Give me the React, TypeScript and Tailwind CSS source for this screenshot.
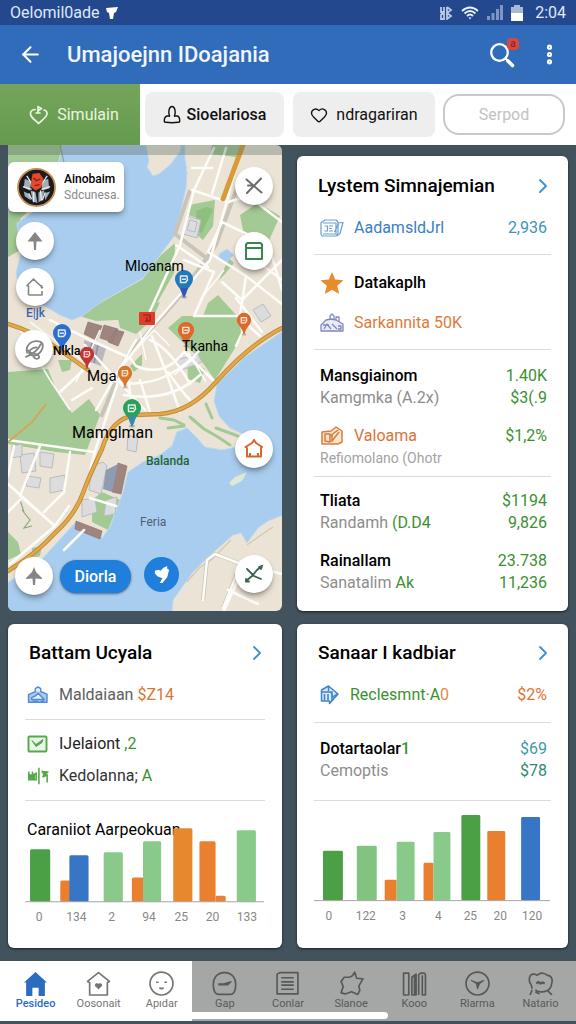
import React from "react";
import { ArrowLeft, ChevronRight, Heart, MoreVertical } from "lucide-react";

type IconProps = { className?: string };

const LeafHeartIcon: React.FC<IconProps> = ({ className }) => (
  <svg viewBox="0 0 20 20" className={className} fill="none" stroke="currentColor" strokeWidth="1.7" strokeLinecap="round" strokeLinejoin="round">
    <path d="M6 4.500C3 4.500 1 6.500 1.500 9.500c.5 3 4.500 5.500 8 9 3.500-3.500 8-6 8.500-9.500.2-2-1-3.800-3-4" />
    <path d="M9 1.500v6.500M9.500 2l3 1.500-3 2M7 8h4" />
  </svg>
);

const PersonIcon: React.FC<IconProps> = ({ className }) => (
  <svg viewBox="0 0 18 20" className={className} fill="none" stroke="currentColor" strokeWidth="1.4" strokeLinecap="round">
    <path d="M6.500 11C5 7 6 1.500 9 1.500S13 7 11.500 11" />
    <path d="M6.500 11H4c-2 .500-2.800 3-2.700 5.500 0 .8 1 .8 1.700.8M11.500 11h3c1.700.500 2.300 3 2.200 5.500 0 .8-1 .8-1.700.8M3 17.300c4 .6 8 .6 12 0" />
  </svg>
);

const SearchIcon: React.FC<IconProps> = ({ className }) => (
  <svg viewBox="0 0 26 26" className={className} fill="none" stroke="currentColor" strokeLinecap="round">
    <circle cx="10.500" cy="10.500" r="8.300" strokeWidth="2.300" />
    <path d="M17 17l1.500 1.500" strokeWidth="2.300" />
    <path d="M19 19l4.500 4.500" strokeWidth="3.600" />
  </svg>
);

const LedgerIcon: React.FC<IconProps> = ({ className }) => (
  <svg viewBox="0 0 24 20" className={className} fill="none" stroke="currentColor" strokeWidth="1.200" strokeLinejoin="round">
    <path d="M2 4l3-2h11l2 2v11l-2 3H2L1 16V5z" />
    <path d="M3 5h13v11H3M18 5l5-.500-3 11-3 2.500M4.500 8h3v5h-3M9 8h4M9 10.500h3M9 13h4M14.500 14l4-8" />
  </svg>
);

const FarmIcon: React.FC<IconProps> = ({ className }) => (
  <svg viewBox="0 0 24 20" className={className} fill="none" stroke="currentColor" strokeWidth="1.300" strokeLinejoin="round">
    <path d="M1 18v-6l5-5 5-1 5 1 7 4v7z" fill="#e9ebf6" />
    <path d="M10 6V3l2-2 2 2v4M16 7V4h3v5M4 16l3-5 4 5M12 11l5 5M18 13h3v3h-3M3 12h6" />
  </svg>
);

const BarnIcon: React.FC<IconProps> = ({ className }) => (
  <svg viewBox="0 0 24 20" className={className} stroke="currentColor" strokeWidth="1.600" strokeLinejoin="round">
    <path d="M1.500 18V9.500L12 5l10 4v9z" fill="#a9caee" />
    <path d="M9 6.500V3l3-2 3 2v3.500M5 13l4-2 3-3 4 4 3 3H5z" fill="#e4effa" />
    <path d="M6 17h6M15 17h4" fill="none" />
  </svg>
);

const CrateIcon: React.FC<IconProps> = ({ className }) => (
  <svg viewBox="0 0 24 20" className={className} fill="#fbe6d2" stroke="currentColor" strokeWidth="1.500" strokeLinejoin="round">
    <path d="M2 6l9-1 5-4 6 4v11l-4 2H2z" />
    <path d="M5 8v7l5 1V8zM10 10l8-6M12 15l7-9M12 8v8" fill="none" />
  </svg>
);

const MailCheckIcon: React.FC<IconProps> = ({ className }) => (
  <svg viewBox="0 0 22 18" className={className} fill="none" stroke="currentColor" strokeWidth="1.900" strokeLinejoin="round">
    <rect x="1.500" y="1.500" width="18" height="15" rx="1" fill="#eaf6e8" />
    <path d="M5 5.500l4 4 7-5-1 3-6 4z" fill="currentColor" strokeWidth="1" />
  </svg>
);

const SplitIcon: React.FC<IconProps> = ({ className }) => (
  <svg viewBox="0 0 24 20" className={className} fill="none" stroke="currentColor" strokeWidth="1.700">
    <path d="M13 1v18" />
    <path d="M2 5v9l4-1V5M6 9l4-2v7H3M16 6h6l-5 5 5-2v8" />
    <path d="M3 9h5v4H3zM17 5l5 1-3 4z" fill="currentColor" />
  </svg>
);

const BoxTagIcon: React.FC<IconProps> = ({ className }) => (
  <svg viewBox="0 0 20 20" className={className} fill="#d7e8f8" stroke="currentColor" strokeWidth="1.500" strokeLinejoin="round">
    <path d="M1.500 5l7-4 9.500 8-8.500 9.500V16h-8z" />
    <path d="M8.500 1v5M2 7h10v9M4.500 9v6M8 9v6M11 7l2 5 4-3" fill="none" />
  </svg>
);

/* ---------- map ---------- */

type PinProps = { x: number; y: number; color: string; s?: number; tail?: string };

// x, y is the centre of the round head
const Pin: React.FC<PinProps> = ({ x, y, color, s = 1, tail }) => (
  <g transform={`translate(${x} ${y}) scale(${s})`}>
    <ellipse cx="0" cy="18" rx="3" ry="1.500" fill="#55606a" opacity=".35" />
    <path d="M-9 0a9 9 0 1 1 18 0c0 4.500-4 8-6.500 12L0 19l-2.500-7C-5 8-9 4.500-9 0z" fill={color} />
    {tail && <path d="M-4 9h8l-2 6-2 4-2-4z" fill={tail} />}
    <path d="M-3.500-3h6.500l.5 4-2 2.500h-5zM-2 .3h4" fill="none" stroke="#fff" strokeWidth="1.500" strokeLinejoin="round" opacity=".85" />
  </g>
);

const MapDrawing: React.FC = () => (
  <svg viewBox="8 145 274 466" preserveAspectRatio="xMidYMid slice" className="absolute inset-0 h-full w-full" aria-hidden="true">
    <rect x="8" y="145" width="274" height="466" fill="#ebe4d6" />

    {/* parks */}
    <g fill="#a3c994">
      <path d="M8 145h56l-6 20-34 10 10 30-14 14 2 30-14 8z" />
      <path d="M212 145h30l-6 12-26-3zM240 215l18-12 22 13-14 31-21-7zM189 205l26-5-2 26-10 14-6-5 4-16-13-4z" />
      <path d="M175 243l-15 13-17 23-43 24-24 12 20 6 40-2 20-14 18-32zM229 258l5 5-10 12-5 5z" />
      <path d="M208 303l10-8 20 22 4 20-27 43-15-21-32-31 14-12h21zM118 318l42-16-8 18-16 14-16-6zM130 366l12-12v11l-8 7z" />
      <path d="M8 372l40-3 8 20 16 24 17-14 11 16-15 40-29-3-48-8zM58 360h14l-2 10-8 2zM187 358l18 11-5 14-12-4z" />
      <path d="M8 532l10 10 3 12-13 6zM92 500l10-8 18 8-12 30-16-8zM32 548l10-2-2 10-7 2z" />
    </g>
    <path d="M196 211l10-4 7 2-11 24-6-2z" fill="#8fbf7f" />

    {/* water */}
    <g fill="#a9cdee" stroke="#bcd9f2" strokeWidth="1">
      <path d="M63 145h83l3 16-2 6 6 9 6-2 12-10 4-6 5-6 1-7h4v13l2 15-1 15-11 47-15 20-17 23-42 24-19 14-10 4-12-5-17-10-23-12-4-20 5-20-4-30 30-20z" />
      <path d="M283 331L245 357 217 384 214 401 219 416 230 428 245 435 252 441 236 447 222 450 205 447 196 437 187 428 177 432 172 446 158 456 143 462 128 472 123 492 110 527 102 538 75 523 43 558 20 575 7 583V612H172L173 600 193 572 207 558 233 535 241 533 247 543 258 528 268 521 283 515z" />
      <path d="M219 254l8-5 7 6-8 7-7-2z" />
    </g>
    <g fill="none" stroke="#a3c994" strokeWidth="3" strokeLinejoin="round" strokeLinecap="round">
      <path d="M160 418l14 2 10 5M190 417l14 12 14 8 12 8M168 428l16-2M216 428l22 8M206 404l6 14" />
    </g>

    {/* shore south of the bay */}
    <path d="M229 483l6-6 12-5-5 9-10 5z" fill="#dfe8d6" />
    <path d="M187 582l12-14 12-8 20-20M247 545l14-10 12-8" stroke="#d5c8ab" strokeWidth="1.200" fill="none" />

    {/* blocks and buildings */}
    <g fill="#dcdcdc" stroke="#b9bcc0" strokeWidth="1">
      <path d="M187 216l14 4-4 18-14-4z" />
      <path d="M190 220l7 2-2 10-8-2zM20 455l14-2 2 18-14 2zM40 452l14 2-2 14-12-2zM28 476l13 2-2 10-13-2zM50 478l15-3v15l-15 3zM82 500l13-2 2 14-15 5zM106 500l11-3-2 17-11 2zM92 466l11-4 4 4-6 28-12-4zM128 435l10 3-2 14-9-2z" />
      <path d="M176 360l22-6 4 8-20 8zM253 310l10-6 8 12-10 6zM12 446l10-2v12l-10 2z" />
    </g>
    <g fill="#a0857f" stroke="#8b7672" strokeWidth=".7">
      <path d="M88 322l14 4-6 14-12-6zM104 325l14 4-6 13-12-4zM116 330l8 2-6 14-10-4z" />
      <path d="M118 463l9 3-6 28-9-2zM76 521l26 10-2 8-25-10z" />
    </g>
    <path d="M106 470l12-6-6 28-9-3z" fill="#8e9bb0" />
    <path d="M84 340l22 8-5 18-16-6z" fill="#b9b6bd" />
    <path d="M92 343l-4 18M98 345l-4 18" stroke="#8d8fa0" strokeWidth="1.500" />
    <path d="M22 510l8 10-6 8 8-2M20 500l4 12M60 145l6 26" stroke="#90a884" strokeWidth="1.200" fill="none" />

    {/* minor roads */}
    <g fill="none" stroke="#c9c4ba" strokeWidth="4" strokeLinejoin="round">
      <path d="M190 190l-15 44 34 26M238 185l-22 60-40 56-50 56-25 60M203 600l4-40 8-6 26 10-18 44" />
    </g>
    <g fill="none" stroke="#fdfcf8" strokeWidth="2.500" strokeLinejoin="round" strokeLinecap="round">
      <path d="M214 148l-20 42-14 55-30 66M192 190l36 12 20-6 34 26M238 160l-12 44-16 56-54 62-32 42-28 84-6 22" />
      <path d="M176 245l32 22M184 260l30 12-20 44h46l6-40-38-24 14-30 46 22 14 46M222 282l20 18 40-40M248 320l-12 26M240 318l20 18" />
      <path d="M246 276l36 28M258 262l24 18M262 332l-26-34M226 148l-14 46M192 168l20 0" />
      <path d="M50 320l40 20 40 18 6 8q28 12 48-14l30 29M85 345l60 65M110 380q50 14 90-30M96 410l40-70M152 336l14 36 14 40M150 340q20 8 40 44M140 380l10 32M128 372l4 42M168 372q14 20 22 28M124 395q46 8 76-20M60 392l30-28M72 400l20-12" />
      <path d="M8 440l86 12M14 446l-6 30M40 446l-20 50 35 30-45 38M8 484l47 42 14-20M70 452l-6 40-20 20M90 498l26 8M20 500l-12 12M84 530l-20 20" />
      <path d="M203 600l4-40 8-6 26 10-18 44M240 562l42 12M240 575l-16 36M228 590l30 14" />
    </g>
    <g fill="none" stroke="#fdfcf8" strokeWidth="1.500">
      <path d="M20 330l30 50 20 30M30 322l60 44M200 300l24-30M100 330l-24 52M134 352l20-22 16 16M146 360l-6-28M174 375l22-18M206 382l-18-30" />
    </g>

    {/* main roads */}
    <g fill="none" strokeLinecap="round">
      <path d="M8 324q26 8 46 22t34 24M282 328q-32 16-66 54-26 30-56 32l-25 1q-24 4-33 34-14 30-19 44-8 22-28 40-18 20-47 38" stroke="#c48c35" strokeWidth="4.500" />
      <path d="M8 324q26 8 46 22t34 24M282 328q-32 16-66 54-26 30-56 32l-25 1q-24 4-33 34-14 30-19 44-8 22-28 40-18 20-47 38" stroke="#e2a94c" strokeWidth="2.500" />
      <path d="M243 145l-20 54" stroke="#d99a3a" strokeWidth="5" />
      <path d="M8 442l24-20 14-18" stroke="#d3a65a" strokeWidth="2" />
    </g>

    <path d="M8 145h274v10H8z" fill="#5a6a62" opacity=".35" />

    {/* pins */}
    <rect x="139" y="312" width="16" height="13" rx="1" fill="#e03c2b" />
    <path d="M143 315h7v6h-5M147 317v5" stroke="#8f1f16" strokeWidth="1.200" fill="none" />
    <Pin x={184} y={279} color="#2477b8" tail="#3457b5" />
    <Pin x={62} y={333} color="#2a6fd0" />
    <Pin x={87} y={354} color="#c43432" s={0.8} />
    <Pin x={125} y={373} color="#d9772b" s={0.8} />
    <Pin x={186} y={330} color="#dd6a2c" s={0.9} />
    <Pin x={244} y={320} color="#dd6a2c" s={0.8} />
    <Pin x={132} y={408} color="#2c9f5c" tail="#3f86b4" />
  </svg>
);

const MapButton: React.FC<{ label: string; className: string; children: React.ReactNode }> = ({ label, className, children }) => (
  <button aria-label={label} className={`absolute flex h-[38px] w-[38px] items-center justify-center rounded-full bg-white shadow-md shadow-black/30 ${className}`}>
    {children}
  </button>
);

const MapLabel: React.FC<{ className: string; children: React.ReactNode }> = ({ className, children }) => (
  <span className={`absolute whitespace-nowrap leading-4 ${className}`}>{children}</span>
);

const ArrowPin: React.FC = () => (
  <svg viewBox="0 0 20 20" className="h-5 w-5" fill="#858585">
    <path d="M10 1l7.500 9.500h-6L11 19H9l-.500-8.500h-6z" />
  </svg>
);

const MapCard: React.FC = () => (
  <section className="relative overflow-hidden rounded-b-md rounded-tr-md">
    <MapDrawing />

    <MapLabel className="left-[117px] top-[113px] text-[14px] text-black">Mloanam</MapLabel>
    <MapLabel className="left-[18px] top-[160px] text-[12px] font-medium text-[#3c67b4]">E|jk</MapLabel>
    <MapLabel className="left-[45px] top-[198px] text-[12px] font-medium text-black">Nlkla</MapLabel>
    <MapLabel className="left-[174px] top-[193px] text-[14px] text-black">Tkanha</MapLabel>
    <MapLabel className="left-[79px] top-[223px] text-[15px] text-black">Mga</MapLabel>
    <MapLabel className="left-[64px] top-[280px] text-[16px] text-black">Mamglman</MapLabel>
    <MapLabel className="left-[138px] top-[308px] text-[12px] font-medium text-[#21652f]">Balanda</MapLabel>
    <MapLabel className="left-[132px] top-[369px] text-[12px] text-[#4d5f74]">Feria</MapLabel>

    <div className="absolute left-0 top-[17px] flex h-[50px] w-[116px] items-center gap-2 rounded-md bg-white pl-[9px] shadow-md shadow-black/30">
      <svg viewBox="0 0 40 40" className="h-[39px] w-[39px] shrink-0">
        <circle cx="20" cy="20" r="19" fill="#1d1b1c" stroke="#c58f57" strokeWidth="1.800" />
        <path d="M8 11l7 3-2 9-6-3zM25 14l7-3 1 10-7 2zM14 23l5 2 2 11-5-2zM22 25l6-2-2 10-4 2zM7 24l6 3 1 6-6-4zM28 26l6-2-5 9z" fill="#9fb0bb" />
        <path d="M10 8l5 8M31 8l-6 9M6 19l9 3M34 19l-9 3M17 24v11M24 23l1 10M12 26l3 6M29 25l-3 8" stroke="#e9edf0" strokeWidth="1.300" />
        <path d="M16 6l7-1 4 6-2 9-6 3-5-4 1-8z" fill="#e3492f" />
        <path d="M17 10l3 3 4-2M18 18l5-1" stroke="#7d1c12" strokeWidth="1.200" fill="none" />
      </svg>
      <div className="leading-4">
        <p className="text-[12px] font-medium text-black">Ainobaim</p>
        <p className="text-[12px] text-[#8a8a8a]">Sdcunesa.</p>
      </div>
    </div>

    <MapButton label="North" className="left-2 top-[77px]">
      <ArrowPin />
    </MapButton>
    <MapButton label="Home" className="left-2 top-[123px]">
      <svg viewBox="0 0 20 20" className="h-5 w-5" fill="none" stroke="#858585" strokeWidth="1.600" strokeLinejoin="round">
        <path d="M3.500 18V9L2 8.500 8.500 2l3 3 6 5.500-1.500.5M17 14v4H3.500M16.500 8v3" />
      </svg>
    </MapButton>
    <MapButton label="Leaf" className="left-[7px] top-[185px]">
      <svg viewBox="0 0 20 20" className="h-[21px] w-[21px]" fill="none" stroke="#858585" strokeWidth="1.700" strokeLinecap="round">
        <path d="M3 13C1 7 6 2 12 2c6 0 7 4 5 8-2 5-8 8-12 4-1-3 3-6 7-6M2 17c5-2 11-6 14-12M4 11c3 4 8 2 10 5s-3 4-5 1" />
      </svg>
    </MapButton>
    <MapButton label="Locate" className="left-[7px] top-[412px]">
      <svg viewBox="0 0 20 20" className="h-5 w-5" fill="#858585">
        <path d="M10 1l2 5 6 6v1l-6.500-.500L11 19H9l-.500-6.500L2 13v-1l6-6z" />
      </svg>
    </MapButton>
    <MapButton label="Close" className="right-[9px] top-[22px]">
      <svg viewBox="0 0 20 20" className="h-5 w-5" fill="none" stroke="#6c6c6c" strokeWidth="2" strokeLinecap="round">
        <path d="M2.500 3.500l15 13M17 2.500L3 17M4 9.500h5" />
      </svg>
    </MapButton>
    <MapButton label="Calendar" className="right-[9px] top-[87px]">
      <svg viewBox="0 0 20 20" className="h-5 w-5" fill="none" stroke="#35884f" strokeWidth="2" strokeLinejoin="round">
        <path d="M2 3.500L3.500 2h13L18 3.500V18H2zM2 7h16" />
      </svg>
    </MapButton>
    <MapButton label="House" className="right-[9px] top-[285px]">
      <svg viewBox="0 0 20 20" className="h-5 w-5" fill="none" stroke="#d3672e" strokeWidth="2" strokeLinejoin="round">
        <path d="M3 17.500V9L1.500 8 8 4l2-3 2 3 6 4-1 1v8.500zM6 14v3M14 14v3M3 17.500h14" />
      </svg>
    </MapButton>
    <MapButton label="Route" className="right-[9px] top-[410px]">
      <svg viewBox="0 0 20 20" className="h-5 w-5" fill="none" stroke="#3c6152" strokeWidth="1.800" strokeLinecap="round">
        <path d="M3 5l5 5 2 2 7 3M18 2l-5 4-5 6-6 5M15 3l3-1-1 3M2 15v2.500h3" />
      </svg>
    </MapButton>

    <button className="absolute left-[52px] top-[415px] flex h-[33px] w-[71px] items-center justify-center rounded-full bg-[#1f7fdb] text-[16px] font-medium text-white shadow-sm shadow-black/40">
      Diorla
    </button>
    <button aria-label="Navigate" className="absolute left-[136px] top-[412px] flex h-[35px] w-[35px] items-center justify-center rounded-full bg-[#1f7fdb]">
      <svg viewBox="0 0 20 20" className="h-[19px] w-[19px]" fill="#fff">
        <path d="M3 6l4-1 2 1 3-3 4-2v3l2 1-2 8-5 6H8l3-5-5-2-3-3z" />
      </svg>
    </button>
  </section>
);

/* ---------- cards ---------- */

const Card: React.FC<{ className?: string; title: string; children: React.ReactNode }> = ({ className = "", title, children }) => (
  <section className={`rounded-md bg-white px-[17px] shadow-sm shadow-black/50 ${className}`}>
    <header className="flex h-8 items-center justify-between pl-1">
      <h2 className="text-[19px] font-medium text-black">{title}</h2>
      <button aria-label={`Open ${title}`} className="-mr-1 text-[#3f8fd0]">
        <ChevronRight size={24} strokeWidth={1.8} />
      </button>
    </header>
    {children}
  </section>
);

const Divider: React.FC<{ className: string }> = ({ className }) => (
  <hr className={`border-t border-[#dcdcdc] ${className}`} />
);

type RowProps = {
  icon?: React.ReactNode;
  label: React.ReactNode;
  value?: string;
  className?: string;
  labelClass?: string;
  valueClass?: string;
};

const Row: React.FC<RowProps> = ({ icon, label, value, className = "h-6", labelClass = "", valueClass = "text-[#3b9030]" }) => (
  <div className={`flex items-center justify-between pr-1 text-[16px] ${className}`}>
    <div className="flex items-center gap-[10px]">
      {icon}
      <span className={`whitespace-nowrap ${labelClass}`}>{label}</span>
    </div>
    {value && <span className={valueClass}>{value}</span>}
  </div>
);

type Bar = { x: number; w: number; h: number; color: string };
type Tick = { x: number; text: string };

const GREEN = "#4ba046";
const LIGHT = "#89ca8b";
const ORANGE = "#ea7f30";
const BLUE = "#3775c6";

const leftBars: Bar[] = [
  { x: 5, w: 20, h: 52, color: GREEN },
  { x: 35, w: 10, h: 21, color: ORANGE },
  { x: 44, w: 19, h: 46, color: BLUE },
  { x: 78, w: 19, h: 49, color: LIGHT },
  { x: 106, w: 12, h: 24, color: ORANGE },
  { x: 117, w: 18, h: 60, color: LIGHT },
  { x: 147, w: 19, h: 73, color: "#e8882e" },
  { x: 189, w: 10, h: 6, color: ORANGE },
  { x: 173, w: 16, h: 60, color: ORANGE },
  { x: 210, w: 19, h: 71, color: LIGHT },
];
const leftTicks: Tick[] = [
  { x: 14, text: "0" },
  { x: 51, text: "134" },
  { x: 86, text: "2" },
  { x: 123, text: "94" },
  { x: 155, text: "25" },
  { x: 186, text: "20" },
  { x: 220, text: "133" },
];

const rightBars: Bar[] = [
  { x: 9, w: 20, h: 50, color: GREEN },
  { x: 43, w: 20, h: 55, color: "#80c480" },
  { x: 71, w: 12, h: 21, color: ORANGE },
  { x: 83, w: 18, h: 59, color: LIGHT },
  { x: 110, w: 10, h: 38, color: ORANGE },
  { x: 120, w: 17, h: 69, color: LIGHT },
  { x: 148, w: 19, h: 86, color: GREEN },
  { x: 174, w: 18, h: 70, color: ORANGE },
  { x: 208, w: 19, h: 84, color: BLUE },
];
const rightTicks: Tick[] = [
  { x: 15, text: "0" },
  { x: 52, text: "122" },
  { x: 89, text: "3" },
  { x: 125, text: "4" },
  { x: 157, text: "25" },
  { x: 187, text: "20" },
  { x: 219, text: "120" },
];

const BarChart: React.FC<{ bars: Bar[]; ticks: Tick[] }> = ({ bars, ticks }) => (
  <svg viewBox="0 0 238 115" className="relative block w-full">
    {bars.map((b) => (
      <rect key={b.x} x={b.x} y={91 - b.h} width={b.w} height={b.h} rx="1.500" fill={b.color} />
    ))}
    <path d="M0 91h237" stroke="#a5a5a5" strokeWidth="1" />
    {ticks.map((t) => (
      <text key={t.x} x={t.x} y="110" textAnchor="middle" fontSize="12" fill="#888">
        {t.text}
      </text>
    ))}
  </svg>
);

/* ---------- bottom nav ---------- */

const navItems: { label: string; icon: React.ReactNode }[] = [
  {
    label: "Pesideo",
    icon: <path d="M12 1L1 11h2v13h6v-8h6v8h6V11h2z" fill="currentColor" stroke="none" />,
  },
  {
    label: "Oosonait",
    icon: (
      <>
        <path d="M12 1.500L1.500 10l2 1v12h17V11l2-1z" />
        <path d="M12 17l-3-3c0-3 3-1.500 3-1 0-.500 3-2 3 1z" fill="currentColor" strokeWidth="1" />
      </>
    ),
  },
  {
    label: "Apıdar",
    icon: (
      <>
        <circle cx="12" cy="12" r="11" />
        <path d="M8 10v1.500M16 10v1.500" strokeWidth="2.500" />
        <path d="M10 16q2 2 4 0" />
      </>
    ),
  },
  {
    label: "Gap",
    icon: (
      <>
        <path d="M1.500 16C0 7 5 1.500 12 1.500S24 7 22.500 16c-.500 5-2 6.500-5 6.500h-11c-3 0-4.500-1.500-5-6.500z" />
        <path d="M6 12.500h5l7-2-3 2.500H6" />
      </>
    ),
  },
  {
    label: "Conlar",
    icon: (
      <>
        <path d="M2 3l3-1.500h17V22H2z" />
        <path d="M6 6.500h12M6 10.500h12M6 13.500h12M6 17.500h12" />
      </>
    ),
  },
  {
    label: "Slanoe",
    icon: <path d="M10 6l3-1.500 2-3.500 2 6 6 .500-4 7 1 4-2 4-6-2.500-6 2-4-1 2-6-2-5 3-4z" />,
  },
  {
    label: "Kooo",
    icon: <path d="M1.500 23V2h5v21zM9.500 23V6l4-3v20zM12 5v18M16 23V3.500L18 2h3.500l1 1.500V23h-3V4" />,
  },
  {
    label: "Rlarma",
    icon: (
      <>
        <circle cx="12" cy="12" r="11" />
        <path d="M6 9l5 2h2l5-2-4 3-2 5-1-5z" fill="currentColor" strokeWidth="1" />
      </>
    ),
  },
  {
    label: "Natario",
    icon: (
      <>
        <path d="M3 13C0 10 1 3 5 3c2 0 3 .5 4 1 3-3 8-2 9 0 5 0 6 5 4.500 9-.500 3-2 5-4.500 6-4 2-9 1-11-1M3 13l1 4M4 18l-2 5M7 20l4 2M19 19l4 4" />
        <path d="M8 12l2-1.500 2 1.500 2-1 2 1" strokeWidth="2.200" />
      </>
    ),
  },
];

const BottomNav: React.FC = () => (
  <nav className="relative bg-white">
    <div className="absolute bottom-0 left-1/3 right-0 top-0 bg-[#a4a7a6]" />
    <div className="absolute bottom-[2px] left-1/3 h-[7px] w-[34%] rounded-r-sm bg-white" />
    <ul className="relative grid h-[60px] grid-cols-9 px-1">
      {navItems.map((item, i) => (
        <li key={item.label}>
          <a
            href="#"
            className={`flex flex-col items-center pt-[10px] text-[11px] leading-4 ${
              i === 0 ? "font-medium text-[#2b6cc0]" : i < 3 ? "text-[#757575]" : "text-[#585858]"
            }`}
          >
            <svg viewBox="0 0 24 24" className="h-[25px] w-[25px]" fill="none" stroke="currentColor" strokeWidth="1.600" strokeLinejoin="round">
              {item.icon}
            </svg>
            {item.label}
          </a>
        </li>
      ))}
    </ul>
  </nav>
);

const App: React.FC = () => {
  return (
    <div className="min-h-screen bg-[#42535e] font-['Roboto','Liberation_Sans',sans-serif]">
      <div className="flex h-[25px] items-center justify-between bg-[#24488d] pl-[10px] pr-[10px] text-[16px] text-[#dfe8f6]">
        <div className="flex items-center gap-[6px]">
          <span>Oelomil0ade</span>
          <svg viewBox="0 0 12 12" className="h-3 w-3" fill="#fff">
            <path d="M0 1l12-1-2 5-2 1-1 6H4L3 6 1 5z" />
          </svg>
        </div>
        <div className="flex items-center gap-2">
          <svg viewBox="0 0 14 14" className="h-[14px] w-[14px]" fill="none" stroke="#b9c9e6" strokeWidth="1.800">
            <path d="M2 1v5h3V1M2 8v5h3V8H2M8 1l4 3-4 3 4 3-4 3V1" />
          </svg>
          <svg viewBox="0 0 18 14" className="h-[14px] w-[18px]" fill="none" stroke="#e9f0fa" strokeWidth="1.800">
            <path d="M1 5q8-7 16 0M3.500 7.500q5.500-5 11 0M6 10q3-3 6 0" />
            <path d="M7.500 11.500h3L9 13.500z" fill="#e9f0fa" stroke="none" />
          </svg>
          <svg viewBox="0 0 16 15" className="h-[15px] w-4" fill="#7d96c4">
            <path d="M0 11h3v4H0zM4.500 8h3v7h-3zM9 4h3v11H9zM13 0h3v15h-3z" />
          </svg>
          <svg viewBox="0 0 12 16" className="h-4 w-3">
            <path d="M0 2h3V0h6v2h3v6H0z" fill="#a9b8d4" />
            <path d="M0 8h12v8H0z" fill="#fff" />
          </svg>
          <span className="pl-1">2:04</span>
        </div>
      </div>

      <header className="flex h-[59px] items-center bg-[#306cba] pl-[18px] pr-[14px] text-white">
        <button aria-label="Back">
          <ArrowLeft size={25} strokeWidth={2} />
        </button>
        <h1 className="flex-1 pl-6 text-[22px] font-medium text-[#f0f5fc]">Umajoejnn IDoajania</h1>
        <button aria-label="Search" className="relative mr-[22px]">
          <SearchIcon className="h-[26px] w-[26px]" />
          <span className="absolute -right-1 -top-1 flex h-3 w-3 items-center justify-center rounded-sm bg-[#d8473f] text-[10px] leading-3 text-[#7c1f26]">
            a
          </span>
        </button>
        <button aria-label="More">
          <MoreVertical size={25} strokeWidth={3} />
        </button>
      </header>

      <div className="flex h-[61px] items-center bg-white pr-[11px] text-[16px]">
        <button className="flex h-full w-[140px] items-center justify-center gap-2 bg-linear-to-b from-[#74a45a] to-[#659b4e] pl-2 text-[#e9f6df]">
          <LeafHeartIcon className="h-5 w-5" />
          Simulain
        </button>
        <button className="ml-[5px] flex h-[45px] flex-[139] items-center justify-center gap-[6px] rounded-lg bg-[#eeeeee] font-medium text-[#111]">
          <PersonIcon className="h-5 w-[18px]" />
          Sioelariosa
        </button>
        <button className="ml-[9px] flex h-[45px] flex-[142] items-center justify-center gap-2 rounded-lg bg-[#eeeeee] text-[#111]">
          <Heart size={18} strokeWidth={1.8} />
          ndragariran
        </button>
        <button className="ml-2 h-[41px] flex-[118] rounded-2xl border-2 border-[#c9c9c9] text-[#c2c2c2]">Serpod</button>
      </div>

      <main className="grid grid-cols-[274fr_271fr] gap-x-[15px] gap-y-[13px] px-2 pb-[13px]">
        <MapCard />

        <Card className="mt-[11px] pb-[18px] pt-[14px]" title="Lystem Simnajemian">
          <Row className="mt-[14px] h-6 pl-[6px]" icon={<LedgerIcon className="h-5 w-6 text-[#6b9fd3]" />} label="AadamsldJrl" labelClass="text-[#3880c6]" value="2,936" valueClass="text-[#3f93c0]" />
          <Divider className="mt-[14px]" />
          <Row
            className="mt-4 h-6 pl-[6px]"
            icon={
              <svg viewBox="0 0 24 22" className="h-[22px] w-6" fill="#e98a2b">
                <path d="M12 0l3.200 7.500 8.300.800-6.300 5.500 2 8.200-7.200-4.300L4.800 22l2-8.200L.5 8.300l8.300-.800z" />
              </svg>
            }
            label="Datakaplh"
            labelClass="font-medium text-black"
          />
          <Row className="mt-4 h-6 pl-[6px]" icon={<FarmIcon className="h-5 w-6 text-[#8088bd]" />} label="Sarkannita 50K" labelClass="text-[#dc7b3c]" />
          <Divider className="mt-[14px]" />
          <Row className="mt-[14px] h-6 pl-[6px]" label="Mansgiainom" labelClass="font-medium text-black" value="1.40K" />
          <Row className="h-5 pl-[6px]" label="Kamgmka (A.2x)" labelClass="text-[#8d8d8d]" value="$3(.9" />
          <Row className="mt-4 h-6 pl-[6px]" icon={<CrateIcon className="h-5 w-6 text-[#dd7b3a]" />} label="Valoama" labelClass="text-[#d8733a]" value="$1,2%" />
          <Row className="h-5 pl-[6px]" label="Refiomolano (Ohotr" labelClass="text-[14px] text-[#a3a3a3]" />
          <Divider className="mt-2" />
          <Row className="mt-3 h-6 pl-[6px]" label="Tliata" labelClass="font-medium text-black" value="$1194" />
          <Row
            className="h-5 pl-[6px]"
            label={
              <>
                Randamh <span className="text-[#3b9030]">(D.D4</span>
              </>
            }
            labelClass="text-[#8d8d8d]"
            value="9,826"
          />
          <Row className="mt-4 h-6 pl-[6px]" label="Rainallam" labelClass="font-medium text-black" value="23.738" />
          <Row
            className="h-5 pl-[6px]"
            label={
              <>
                Sanatalim <span className="text-[#3b9030]">Ak</span>
              </>
            }
            labelClass="text-[#8d8d8d]"
            value="11,236"
          />
        </Card>

        <Card className="pb-[22px] pt-[13px]" title="Battam Ucyala">
          <Row
            className="mt-[14px] h-6 pl-[2px]"
            icon={<BarnIcon className="h-[18px] w-[22px] text-[#4f8cd2]" />}
            label={
              <>
                Maldaiaan <span className="text-[#dc7434]">$Z14</span>
              </>
            }
            labelClass="text-[#606060]"
          />
          <Divider className="mt-3" />
          <Row
            className="mt-3 h-6 pl-[2px]"
            icon={<MailCheckIcon className="h-[18px] w-[22px] text-[#54a74b]" />}
            label={
              <>
                IJelaiont <span className="text-[#3b9030]">,2</span>
              </>
            }
            labelClass="text-[#222]"
          />
          <Row
            className="mt-2 h-6 pl-[2px]"
            icon={<SplitIcon className="h-5 w-[22px] text-[#54a74b]" />}
            label={
              <>
                Kedolanna; <span className="text-[#3b9030]">A</span>
              </>
            }
            labelClass="text-[#333]"
          />
          <Divider className="mt-3" />
          <div className="relative mt-[9px]">
            <h3 className="absolute left-[2px] top-2 text-[16px] leading-6 text-black">Caraniiot Aarpeokuan</h3>
            <BarChart bars={leftBars} ticks={leftTicks} />
          </div>
        </Card>

        <Card className="pb-[22px] pt-[13px]" title="Sanaar I kadbiar">
          <Row
            className="mt-[14px] h-6 pl-[6px]"
            icon={<BoxTagIcon className="h-5 w-5 text-[#3d83c9]" />}
            label={
              <>
                Reclesmnt·A<span className="text-[#e08a4a]">0</span>
              </>
            }
            labelClass="text-[#3b9030]"
            value="$2%"
            valueClass="text-[#dc7434]"
          />
          <Divider className="mt-[15px]" />
          <Row
            className="mt-[14px] h-6 pl-[6px]"
            label={
              <>
                Dotartaolar<span className="text-[#3b9030]">1</span>
              </>
            }
            labelClass="font-medium text-black"
            value="$69"
            valueClass="text-[#3f9aa2]"
          />
          <Row className="h-5 pl-[6px]" label="Cemoptis" labelClass="text-[#8d8d8d]" value="$78" valueClass="text-[#2f8a6e]" />
          <Divider className="mt-[19px]" />
          <div className="mt-[9px]">
            <BarChart bars={rightBars} ticks={rightTicks} />
          </div>
        </Card>
      </main>

      <BottomNav />
    </div>
  );
};

export default App;
